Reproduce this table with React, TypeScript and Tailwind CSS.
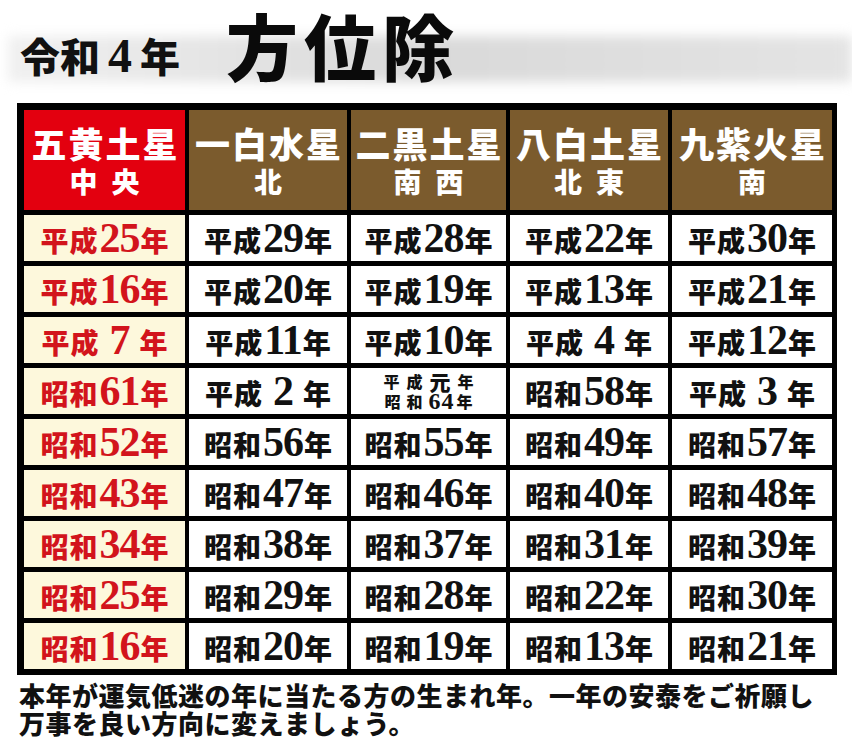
import React from "react";

const JP = "font-['Noto_Sans_CJK_JP',sans-serif]";
const NUM = "font-['Liberation_Serif',serif]";

type Cell = string;

const cols: { title: string; dir: string; red?: boolean; rows: Cell[] }[] = [
  {
    title: "五黄土星",
    dir: "中央",
    red: true,
    rows: ["平成|25", "平成|16", "平成|7", "昭和|61", "昭和|52", "昭和|43", "昭和|34", "昭和|25", "昭和|16"],
  },
  {
    title: "一白水星",
    dir: "北",
    rows: ["平成|29", "平成|20", "平成|11", "平成|2", "昭和|56", "昭和|47", "昭和|38", "昭和|29", "昭和|20"],
  },
  {
    title: "二黒土星",
    dir: "南西",
    rows: ["平成|28", "平成|19", "平成|10", "SPECIAL", "昭和|55", "昭和|46", "昭和|37", "昭和|28", "昭和|19"],
  },
  {
    title: "八白土星",
    dir: "北東",
    rows: ["平成|22", "平成|13", "平成|4", "昭和|58", "昭和|49", "昭和|40", "昭和|31", "昭和|22", "昭和|13"],
  },
  {
    title: "九紫火星",
    dir: "南",
    rows: ["平成|30", "平成|21", "平成|12", "平成|3", "昭和|57", "昭和|48", "昭和|39", "昭和|30", "昭和|21"],
  },
];

function YearCell({ value, red }: { value: string; red?: boolean }) {
  const color = red ? "text-[#d2141c]" : "text-[#111]";
  const bg = red ? "bg-[#fdf8dc]" : "bg-white";
  if (value === "SPECIAL") {
    return (
      <div className={`${bg} h-[46px] flex flex-col items-center justify-center ${color}`}>
        <div className={`flex items-end h-[20px] leading-[20px] ${JP} font-black text-[16px] whitespace-nowrap`}>
          <span className="tracking-[7px]">平成</span>
          <span className="text-[21px] leading-[20px] mr-[7px]">元</span>
          <span>年</span>
        </div>
        <div className={`flex items-end h-[20px] leading-[20px] ${JP} font-black text-[16px] whitespace-nowrap`}>
          <span className="tracking-[6px]">昭和</span>
          <span className={`${NUM} font-bold text-[24px] leading-[20px] tracking-[1px] mr-[2px]`}>64</span>
          <span>年</span>
        </div>
      </div>
    );
  }
  const [pre, num] = value.split("|");
  const single = num.length === 1;
  return (
    <div className={`${bg} h-[46px] flex items-center justify-center ${color}`}>
      <div className="flex items-baseline leading-none whitespace-nowrap">
        <span className={`${JP} font-black text-[28px] tracking-[1px]`}>{pre}</span>
        <span
          className={`${NUM} font-bold text-[42px] ${single ? "mx-[10px]" : "mx-[1px]"} tracking-[-1px]`}
        >
          {num}
        </span>
        <span className={`${JP} font-black text-[28px]`}>年</span>
      </div>
    </div>
  );
}

export default function App() {
  return (
    <div className="w-[852px] h-[741px] bg-white overflow-hidden">
      {/* Title */}
      <div className="relative h-[103px]">
        <div className="absolute left-[8px] right-[0px] top-[36px] h-[46px] bg-gradient-to-r from-[#f0f0f0] via-[#d9d9d9] to-[#e4e4e4] blur-[6px]" />
        <div className="relative flex items-end h-[84px] pl-[20px] whitespace-nowrap">
          <div className={`${JP} font-black text-[40px] leading-[44px] text-[#111] mb-[6px] flex items-baseline`}>
            <span>令和</span>
            <span className={`${NUM} font-bold text-[48px] mx-[8px]`}>4</span>
            <span>年</span>
          </div>
          <div className={`${JP} font-black text-[72px] leading-[80px] text-[#0a0a0a] ml-[46px] tracking-[6px]`}>
            方位除
          </div>
        </div>
      </div>

      {/* Table */}
      <div className="ml-[17px] w-[820px] bg-black pt-[7px] pb-[6px] pl-[7px] pr-[5px]">
        <div className="grid grid-cols-[161px_158px_155px_158px_160px] gap-x-[4px] gap-y-[5px]">
          {cols.map((c) => (
            <div
              key={c.title}
              className={`${c.red ? "bg-[#e3000f]" : "bg-[#7b5b2d]"} h-[100px] flex flex-col items-center justify-center text-white ${JP} font-black whitespace-nowrap`}
            >
              <div className="text-[35px] leading-[42px] tracking-[2px] pl-[2px]">{c.title}</div>
              <div className="text-[28px] leading-[34px] tracking-[14px] pl-[14px]">{c.dir}</div>
            </div>
          ))}
          {Array.from({ length: 9 }).map((_, r) =>
            cols.map((c, ci) => <YearCell key={`${r}-${ci}`} value={c.rows[r]} red={c.red} />)
          )}
        </div>
      </div>

      {/* Footer text */}
      <div className={`${JP} font-black text-[26px] leading-[28px] text-[#111] pl-[19px] pt-[6px] tracking-[0.5px]`}>
        <div className="whitespace-nowrap">本年が運気低迷の年に当たる方の生まれ年。一年の安泰をご祈願し</div>
        <div className="whitespace-nowrap">万事を良い方向に変えましょう。</div>
      </div>
    </div>
  );
}
